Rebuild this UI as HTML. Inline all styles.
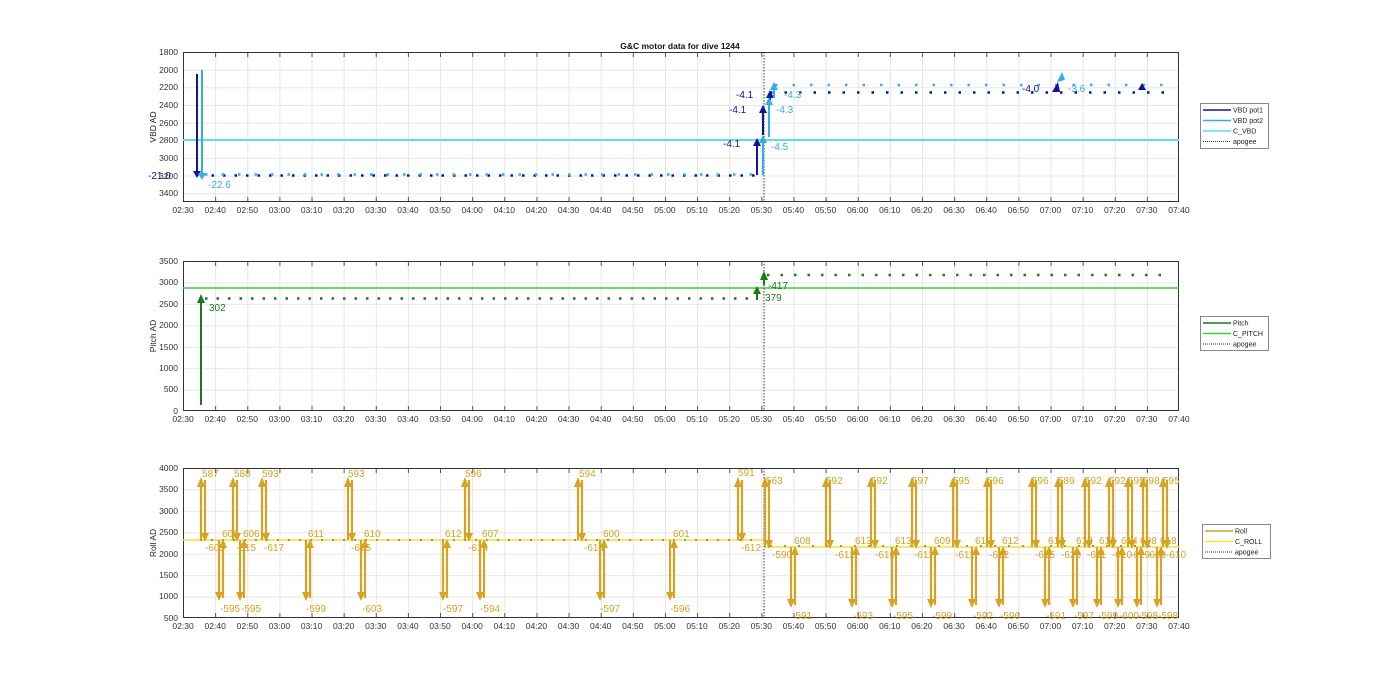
<!DOCTYPE html><html><head><style>
body{margin:0;background:#fff;width:1400px;height:693px;overflow:hidden;font-family:"Liberation Sans",sans-serif}
.tl{position:absolute;left:167px;display:flex;font-size:8.5px;color:#333}
.tl span{width:32.13px;text-align:center;flex:none}
svg{position:absolute;left:0;top:0}
</style></head><body>
<svg width="1400" height="693" font-family="Liberation Sans, sans-serif">
<defs>
<pattern id="gv" x="183" y="0" width="32.13" height="693" patternUnits="userSpaceOnUse"><line x1="0.5" y1="0" x2="0.5" y2="693" stroke="#e6e6e6"/></pattern>
<pattern id="h1" x="0" y="52" width="1400" height="17.65" patternUnits="userSpaceOnUse"><line x1="0" y1="0.5" x2="1400" y2="0.5" stroke="#e6e6e6"/></pattern>
<pattern id="h2" x="0" y="261" width="1400" height="21.43" patternUnits="userSpaceOnUse"><line x1="0" y1="0.5" x2="1400" y2="0.5" stroke="#e6e6e6"/></pattern>
<pattern id="tk" x="183" y="0" width="32.13" height="693" patternUnits="userSpaceOnUse"><line x1="0.5" y1="0" x2="0.5" y2="693" stroke="#555"/></pattern>
<g id="UL" stroke="#d6a323" stroke-width="2.2" fill="#d6a323"><line x1="0" y1="540" x2="0" y2="485"/><polygon points="-4,487 4,487 0,477" stroke="none"/><line x1="4" y1="480" x2="4" y2="534"/><polygon points="0,533 8,533 4,542" stroke="none"/></g>
<g id="DL" stroke="#d6a323" stroke-width="2.2" fill="#d6a323"><line x1="0" y1="540" x2="0" y2="593"/><polygon points="-4,592 4,592 0,601" stroke="none"/><line x1="4" y1="598" x2="4" y2="546"/><polygon points="0,548 8,548 4,539" stroke="none"/></g>
<g id="UR" stroke="#d6a323" stroke-width="2.2" fill="#d6a323"><line x1="0" y1="547" x2="0" y2="485"/><polygon points="-4,487 4,487 0,477" stroke="none"/><line x1="4" y1="480" x2="4" y2="541"/><polygon points="0,540 8,540 4,549" stroke="none"/></g>
<g id="DR" stroke="#d6a323" stroke-width="2.2" fill="#d6a323"><line x1="0" y1="547" x2="0" y2="600"/><polygon points="-4,599 4,599 0,608" stroke="none"/><line x1="4" y1="605" x2="4" y2="553"/><polygon points="0,555 8,555 4,546" stroke="none"/></g>
</defs>
<!-- title -->
<text x="680" y="49" font-size="8.5" font-weight="bold" text-anchor="middle" fill="#111">G&amp;C motor data for dive 1244</text>
<!-- Axes 1 -->
<rect x="183" y="52" width="996" height="150" fill="url(#gv)"/>
<rect x="183" y="52" width="996" height="150" fill="url(#h1)"/>
<rect x="183" y="52" width="996" height="5" fill="url(#tk)"/><rect x="183" y="197" width="996" height="5" fill="url(#tk)"/>
<rect x="183.5" y="52.5" width="995" height="149" fill="none" stroke="#333"/>
<g font-size="8.5" fill="#333" text-anchor="end"><text x="178" y="55">1800</text><text x="178" y="73">2000</text><text x="178" y="90">2200</text><text x="178" y="108">2400</text><text x="178" y="126">2600</text><text x="178" y="143">2800</text><text x="178" y="161">3000</text><text x="178" y="179">3200</text><text x="178" y="196">3400</text></g>
<text transform="translate(156,127) rotate(-90)" font-size="8.5" fill="#222" text-anchor="middle">VBD AD</text>
<line x1="183" y1="140" x2="1179" y2="140" stroke="#5fe0e0" stroke-width="2"/>
<line x1="764" y1="52" x2="764" y2="202" stroke="#333" stroke-dasharray="1.5 1.5"/>
<line x1="200" y1="175.5" x2="760" y2="175.5" stroke="#1212a0" stroke-width="2.5" stroke-dasharray="2.5 9"/>
<line x1="205" y1="174.5" x2="760" y2="174.5" stroke="#30b0e8" stroke-width="2.5" stroke-dasharray="2.5 14"/>
<line x1="770" y1="92.5" x2="1165" y2="92.5" stroke="#1212a0" stroke-width="2.5" stroke-dasharray="2.5 12"/>
<line x1="775" y1="85" x2="1172" y2="85" stroke="#30b0e8" stroke-width="2.5" stroke-dasharray="2.5 15"/>
<g stroke="#1212a0" stroke-width="2" fill="#1212a0"><line x1="197" y1="74" x2="197" y2="172"/><polygon points="193,171 201,171 197,178" stroke="none"/>
<line x1="757" y1="175" x2="757" y2="144"/><polygon points="753,146 761,146 757,138" stroke="none"/>
<line x1="763" y1="135" x2="763" y2="111"/><polygon points="759,113 767,113 763,105" stroke="none"/>
<line x1="770" y1="100" x2="770" y2="96"/><polygon points="766,98 774,98 770,90" stroke="none"/>
<polygon points="1052,92 1060,92 1058,82" stroke="none"/><polygon points="1138,90 1146,90 1142,83" stroke="none"/></g>
<g stroke="#30b0e8" stroke-width="2" fill="#30b0e8"><line x1="202" y1="70" x2="202" y2="174"/><polygon points="198,173 206,173 202,180" stroke="none"/>
<line x1="763" y1="175" x2="763" y2="142"/><polygon points="759,143 767,143 763,135" stroke="none"/>
<line x1="769" y1="137" x2="769" y2="104"/><polygon points="765,105 773,105 769,97" stroke="none"/>
<line x1="774" y1="98" x2="774" y2="90"/><polygon points="770,90 778,90 774,82" stroke="none"/>
<polygon points="1057,82 1065,80 1062,72" stroke="none"/></g>
<g font-size="10" fill="#1212a0"><text x="148" y="179">-21.0</text><text x="723" y="147">-4.1</text><text x="729" y="113">-4.1</text><text x="736" y="98">-4.1</text><text x="1022" y="92">-4.0</text></g>
<g font-size="10" fill="#30b0e8"><text x="208" y="188">-22.6</text><text x="771" y="150">-4.5</text><text x="776" y="113">-4.3</text><text x="784" y="98">-4.3</text><text x="1068" y="92">-3.6</text></g>
<rect x="1200.5" y="103.5" width="68" height="45" fill="#fff" stroke="#888"/>
<g font-size="7" fill="#222"><line x1="1203" y1="110" x2="1231" y2="110" stroke="#1212a0" stroke-width="1.5"/><text x="1233" y="112.5">VBD pot1</text>
<line x1="1203" y1="120.5" x2="1231" y2="120.5" stroke="#30b0e8" stroke-width="1.5"/><text x="1233" y="123">VBD pot2</text>
<line x1="1203" y1="131" x2="1231" y2="131" stroke="#5fe0e0" stroke-width="1.5"/><text x="1233" y="133.5">C_VBD</text>
<line x1="1203" y1="141.5" x2="1231" y2="141.5" stroke="#333" stroke-dasharray="1 1"/><text x="1233" y="144">apogee</text></g>
<!-- Axes 2 -->
<rect x="183" y="261" width="996" height="150" fill="url(#gv)"/>
<rect x="183" y="261" width="996" height="150" fill="url(#h2)"/>
<rect x="183" y="261" width="996" height="5" fill="url(#tk)"/><rect x="183" y="406" width="996" height="5" fill="url(#tk)"/>
<rect x="183.5" y="261.5" width="995" height="149" fill="none" stroke="#333"/>
<g font-size="8.5" fill="#333" text-anchor="end"><text x="178" y="264">3500</text><text x="178" y="285">3000</text><text x="178" y="307">2500</text><text x="178" y="328">2000</text><text x="178" y="350">1500</text><text x="178" y="371">1000</text><text x="178" y="392">500</text><text x="178" y="414">0</text></g>
<text transform="translate(156,336) rotate(-90)" font-size="8.5" fill="#222" text-anchor="middle">Pitch AD</text>
<line x1="183" y1="288" x2="1179" y2="288" stroke="#38d038" stroke-width="1.5"/>
<line x1="764" y1="261" x2="764" y2="411" stroke="#333" stroke-dasharray="1.5 1.5"/>
<line x1="205" y1="298.5" x2="755" y2="298.5" stroke="#1a7a1a" stroke-width="2.5" stroke-dasharray="2.5 9"/>
<line x1="767" y1="275" x2="1165" y2="275" stroke="#1a7a1a" stroke-width="2.5" stroke-dasharray="2.5 11"/>
<g stroke="#1a7a1a" stroke-width="2" fill="#1a7a1a"><line x1="201" y1="405" x2="201" y2="302"/><polygon points="197,303 205,303 201,294" stroke="none"/>
<line x1="757" y1="300" x2="757" y2="292"/><polygon points="753,294 761,294 757,286" stroke="none"/>
<line x1="764" y1="285" x2="764" y2="279"/><polygon points="760,280 768,280 764,271" stroke="none"/></g>
<g font-size="10" fill="#1a7a1a"><text x="209" y="311">302</text><text x="768" y="289">-417</text><text x="765" y="301">379</text></g>
<rect x="1200.5" y="316.5" width="68" height="34" fill="#fff" stroke="#888"/>
<g font-size="7" fill="#222"><line x1="1203" y1="323" x2="1231" y2="323" stroke="#1a7a1a" stroke-width="1.5"/><text x="1233" y="325.5">Pitch</text>
<line x1="1203" y1="333.5" x2="1231" y2="333.5" stroke="#38d038" stroke-width="1.5"/><text x="1233" y="336">C_PITCH</text>
<line x1="1203" y1="344" x2="1231" y2="344" stroke="#333" stroke-dasharray="1 1"/><text x="1233" y="346.5">apogee</text></g>
<!-- Axes 3 -->
<rect x="183" y="468" width="996" height="150" fill="url(#gv)"/>
<rect x="183" y="468" width="996" height="150" fill="url(#h2)" transform="translate(0,-7.29)" clip-path="inset(7.29px 0 0 0)"/>
<rect x="183" y="468" width="996" height="5" fill="url(#tk)"/><rect x="183" y="613" width="996" height="5" fill="url(#tk)"/>
<rect x="183.5" y="468.5" width="995" height="149" fill="none" stroke="#333"/>
<g font-size="8.5" fill="#333" text-anchor="end"><text x="178" y="471">4000</text><text x="178" y="492">3500</text><text x="178" y="514">3000</text><text x="178" y="535">2500</text><text x="178" y="557">2000</text><text x="178" y="578">1500</text><text x="178" y="599">1000</text><text x="178" y="621">500</text></g>
<text transform="translate(156,543) rotate(-90)" font-size="8.5" fill="#222" text-anchor="middle">Roll AD</text>
<line x1="183" y1="540" x2="764" y2="540" stroke="#f2e23a" stroke-width="1.5"/>
<line x1="764" y1="547" x2="1179" y2="547" stroke="#f2e23a" stroke-width="1.5"/>
<line x1="764" y1="468" x2="764" y2="618" stroke="#333" stroke-dasharray="1.5 1.5"/>
<line x1="200" y1="540" x2="760" y2="540" stroke="#b8962a" stroke-width="2" stroke-dasharray="2 9"/>
<line x1="770" y1="546" x2="1170" y2="546" stroke="#b8962a" stroke-width="2" stroke-dasharray="2 12"/>
<use href="#UL" x="201"/><use href="#UL" x="233"/><use href="#UL" x="262"/><use href="#UL" x="348"/><use href="#UL" x="465"/><use href="#UL" x="578"/><use href="#UL" x="738"/>
<use href="#DL" x="219"/><use href="#DL" x="240"/><use href="#DL" x="306"/><use href="#DL" x="361"/><use href="#DL" x="443"/><use href="#DL" x="480"/><use href="#DL" x="600"/><use href="#DL" x="670"/>
<use href="#UR" x="765"/><use href="#UR" x="826"/><use href="#UR" x="871"/><use href="#UR" x="912"/><use href="#UR" x="953"/><use href="#UR" x="987"/><use href="#UR" x="1032"/><use href="#UR" x="1058"/><use href="#UR" x="1085"/><use href="#UR" x="1109"/><use href="#UR" x="1128"/><use href="#UR" x="1143"/><use href="#UR" x="1163"/>
<use href="#DR" x="791"/><use href="#DR" x="852"/><use href="#DR" x="892"/><use href="#DR" x="931"/><use href="#DR" x="972"/><use href="#DR" x="999"/><use href="#DR" x="1045"/><use href="#DR" x="1073"/><use href="#DR" x="1097"/><use href="#DR" x="1118"/><use href="#DR" x="1137"/><use href="#DR" x="1157"/>
<g font-size="10" fill="#d6a323">
<text x="202" y="477">587</text><text x="234" y="477">588</text><text x="262" y="477">593</text><text x="348" y="477">593</text><text x="465" y="477">596</text><text x="579" y="477">594</text><text x="738" y="476">591</text>
<text x="205" y="551">-605</text><text x="236" y="551">-615</text><text x="264" y="551">-617</text><text x="351" y="551">-615</text><text x="468" y="551">-614</text><text x="584" y="551">-614</text><text x="741" y="551">-612</text>
<text x="222" y="537">606</text><text x="243" y="537">606</text><text x="308" y="537">611</text><text x="364" y="537">610</text><text x="445" y="537">612</text><text x="482" y="537">607</text><text x="603" y="537">600</text><text x="673" y="537">601</text>
<text x="220" y="612">-595</text><text x="241" y="612">-595</text><text x="306" y="612">-599</text><text x="362" y="612">-603</text><text x="443" y="612">-597</text><text x="480" y="612">-594</text><text x="600" y="612">-597</text><text x="670" y="612">-596</text>
<text x="766" y="484">563</text><text x="826" y="484">592</text><text x="871" y="484">592</text><text x="912" y="484">597</text><text x="953" y="484">595</text><text x="987" y="484">596</text><text x="1032" y="484">596</text><text x="1058" y="484">589</text><text x="1085" y="484">592</text><text x="1109" y="484">592</text><text x="1128" y="484">595</text><text x="1143" y="484">598</text><text x="1163" y="484">595</text>
<text x="772" y="558">-590</text><text x="835" y="558">-612</text><text x="875" y="558">-616</text><text x="914" y="558">-611</text><text x="955" y="558">-611</text><text x="989" y="558">-612</text><text x="1035" y="558">-615</text><text x="1061" y="558">-620</text><text x="1087" y="558">-611</text><text x="1112" y="558">-610</text><text x="1130" y="558">-619</text><text x="1146" y="558">-609</text><text x="1166" y="558">-610</text>
<text x="794" y="544">608</text><text x="855" y="544">613</text><text x="895" y="544">613</text><text x="934" y="544">609</text><text x="975" y="544">618</text><text x="1002" y="544">612</text><text x="1048" y="544">612</text><text x="1076" y="544">612</text><text x="1099" y="544">618</text><text x="1121" y="544">614</text><text x="1140" y="544">608</text><text x="1160" y="544">618</text>
<text x="792" y="619">-591</text><text x="853" y="619">-593</text><text x="893" y="619">-595</text><text x="932" y="619">-599</text><text x="973" y="619">-592</text><text x="1000" y="619">-596</text><text x="1046" y="619">-591</text><text x="1074" y="619">-597</text><text x="1098" y="619">-599</text><text x="1119" y="619">-600</text><text x="1138" y="619">-598</text><text x="1158" y="619">-598</text>
</g>
<rect x="1202.5" y="524.5" width="68" height="34" fill="#fff" stroke="#888"/>
<g font-size="7" fill="#222"><line x1="1205" y1="531" x2="1233" y2="531" stroke="#d6a323" stroke-width="1.5"/><text x="1235" y="533.5">Roll</text>
<line x1="1205" y1="541.5" x2="1233" y2="541.5" stroke="#f2e23a" stroke-width="1.5"/><text x="1235" y="544">C_ROLL</text>
<line x1="1205" y1="552" x2="1233" y2="552" stroke="#333" stroke-dasharray="1 1"/><text x="1235" y="554.5">apogee</text></g>
</svg>
<div class="tl" style="top:205px"><span>02:30</span><span>02:40</span><span>02:50</span><span>03:00</span><span>03:10</span><span>03:20</span><span>03:30</span><span>03:40</span><span>03:50</span><span>04:00</span><span>04:10</span><span>04:20</span><span>04:30</span><span>04:40</span><span>04:50</span><span>05:00</span><span>05:10</span><span>05:20</span><span>05:30</span><span>05:40</span><span>05:50</span><span>06:00</span><span>06:10</span><span>06:20</span><span>06:30</span><span>06:40</span><span>06:50</span><span>07:00</span><span>07:10</span><span>07:20</span><span>07:30</span><span>07:40</span></div>
<div class="tl" style="top:414px"><span>02:30</span><span>02:40</span><span>02:50</span><span>03:00</span><span>03:10</span><span>03:20</span><span>03:30</span><span>03:40</span><span>03:50</span><span>04:00</span><span>04:10</span><span>04:20</span><span>04:30</span><span>04:40</span><span>04:50</span><span>05:00</span><span>05:10</span><span>05:20</span><span>05:30</span><span>05:40</span><span>05:50</span><span>06:00</span><span>06:10</span><span>06:20</span><span>06:30</span><span>06:40</span><span>06:50</span><span>07:00</span><span>07:10</span><span>07:20</span><span>07:30</span><span>07:40</span></div>
<div class="tl" style="top:621px"><span>02:30</span><span>02:40</span><span>02:50</span><span>03:00</span><span>03:10</span><span>03:20</span><span>03:30</span><span>03:40</span><span>03:50</span><span>04:00</span><span>04:10</span><span>04:20</span><span>04:30</span><span>04:40</span><span>04:50</span><span>05:00</span><span>05:10</span><span>05:20</span><span>05:30</span><span>05:40</span><span>05:50</span><span>06:00</span><span>06:10</span><span>06:20</span><span>06:30</span><span>06:40</span><span>06:50</span><span>07:00</span><span>07:10</span><span>07:20</span><span>07:30</span><span>07:40</span></div>
</body></html>
